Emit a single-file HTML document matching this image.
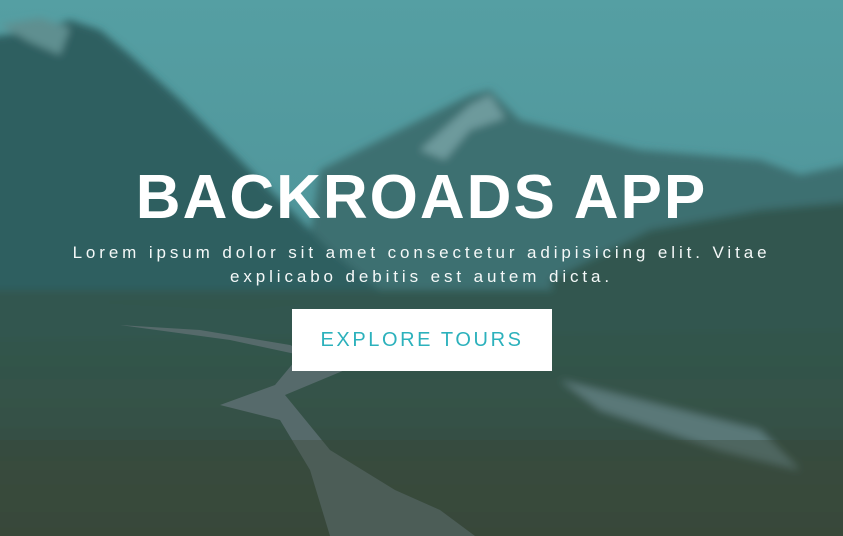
<!DOCTYPE html>
<html><head><meta charset="utf-8"><style>
html,body{margin:0;padding:0;width:843px;height:536px;overflow:hidden;background:#3d6666;position:relative}
.bg{position:absolute;left:0;top:0;display:block;overflow:hidden}
h1{margin:0;position:absolute;top:160px;left:0;width:843px;text-align:center;font:bold 62px/76px "Liberation Sans",sans-serif;letter-spacing:2px;color:#fff}
p{margin:0;position:absolute;top:241px;left:0;width:843px;text-align:center;font:17px/24px "Liberation Sans",sans-serif;letter-spacing:3.9px;color:#f4f8f8;white-space:nowrap}
.btn{position:absolute;left:292px;top:309px;width:260px;height:62px;background:#fff;color:#2cb1bc;font:20px/62px "Liberation Sans",sans-serif;letter-spacing:2.6px;text-align:center}
</style></head><body>
<svg class="bg" width="843" height="536" viewBox="0 0 843 536">
<defs>
<linearGradient id="sky" x1="0" y1="0" x2="0" y2="1"><stop offset="0" stop-color="#559fa3"/><stop offset="1" stop-color="#4a8a90"/></linearGradient>
<linearGradient id="gr" x1="0" y1="0" x2="0" y2="1"><stop offset="0" stop-color="#30574f"/><stop offset="1" stop-color="#3a4a3c"/></linearGradient>
<filter id="bl" x="-10%" y="-10%" width="120%" height="120%"><feGaussianBlur stdDeviation="4"/></filter>
</defs>
<rect width="843" height="536" fill="url(#sky)"/>
<g filter="url(#bl)">
<polygon points="320,170 400,130 470,95 490,90 520,120 560,130 600,140 640,150 700,155 760,160 800,175 870,160 870,300 300,300" fill="#3c6f71"/>
<polygon points="420,150 470,105 490,95 505,118 470,130 445,160" fill="#6d9a9c"/>
<polygon points="-30,40 40,30 70,20 100,30 130,55 180,100 260,180 330,250 380,290 -30,300" fill="#2e5f60"/>
<polygon points="0,25 40,18 70,28 60,55 30,42" fill="#5f8f90"/>
<polygon points="550,280 650,230 760,210 870,200 870,320 560,320" fill="#30574f"/>
<rect x="-30" y="290" width="903" height="270" fill="url(#gr)"/>
<polygon points="-30,300 250,310 350,300 870,290 870,330 -30,340" fill="#30574f"/>
<polygon points="560,380 640,400 760,430 800,470 720,450 600,410" fill="#5a7878"/>
</g>
<polygon points="120,325 200,330 290,345 345,370 285,395 330,450 395,490 440,510 475,536 330,536 310,470 280,420 220,405 275,385 300,355 230,340" fill="#566a6b"/>
<rect y="440" width="843" height="96" fill="#3a4535" opacity=".35"/>
</svg>
<h1>BACKROADS APP</h1>
<p>Lorem ipsum dolor sit amet consectetur adipisicing elit. Vitae<br>explicabo debitis est autem dicta.</p>
<div class="btn">EXPLORE TOURS</div>
</body></html>
